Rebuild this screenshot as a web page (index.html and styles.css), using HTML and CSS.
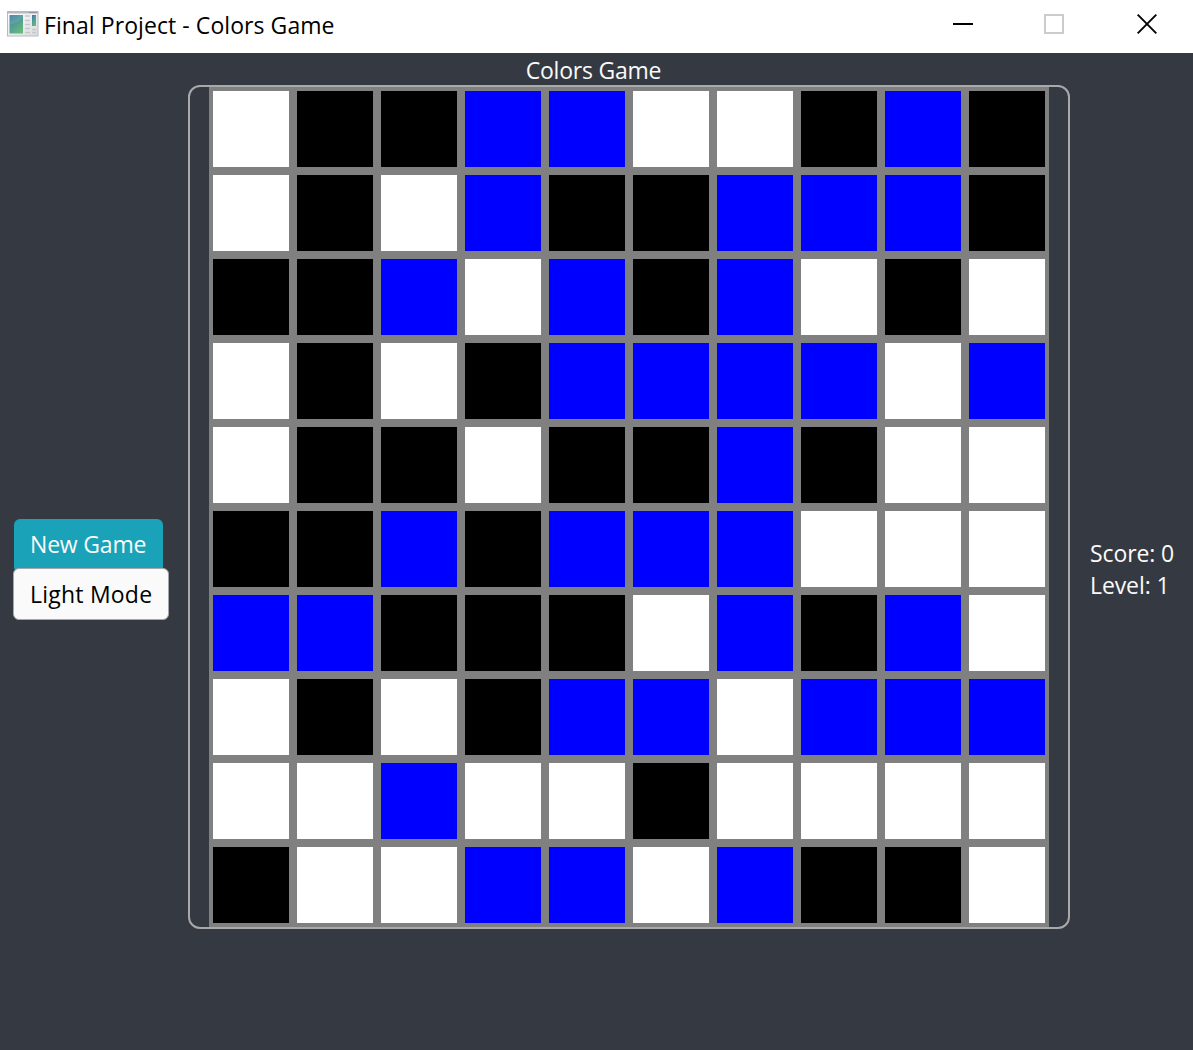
FILE: index.html
```html
<!DOCTYPE html>
<html lang="en">
<head>
<meta charset="utf-8">
<title>Final Project - Colors Game</title>
<link rel="stylesheet" href="styles.css">
</head>
<body>
<header class="titlebar">
  <svg class="app-icon" width="32" height="26" viewBox="0 0 32 26">
    <defs>
      <linearGradient id="pane" x1="0" y1="0" x2="0.6" y2="1"><stop offset="0" stop-color="#3d78a4"/><stop offset=".5" stop-color="#4f9b98"/><stop offset="1" stop-color="#67b77b"/></linearGradient>
      <linearGradient id="frame" x1="0" y1="0" x2="1" y2="1"><stop offset="0" stop-color="#fff"/><stop offset="1" stop-color="#d9dbdd"/></linearGradient>
    </defs>
    <rect x=".5" y=".5" width="30.500" height="24.500" fill="url(#frame)" stroke="#b6bac0"/>
    <path d="M1 1.500h30" stroke="#b4bac4" stroke-width="2"/>
    <path d="M22 1.500h8" stroke="#9097a2" stroke-width="1"/>
    <rect x="2.500" y="4" width="13.500" height="18.500" fill="url(#pane)"/>
    <path d="M2.500 14Q11 12 16 6V4H2.500z" fill="#fff" opacity=".1"/>
    <rect x="25" y="4" width="4" height="11" fill="url(#pane)"/>
    <path d="M18 5h5M18 9.500h5M18 13.500h5M18 17.500h5M18 21.500h5M25 18.500h4M25 21.500h4" stroke="#c4c7ca" stroke-width="1.500"/>
  </svg>
  <span class="window-title">Final Project - Colors Game</span>
  <div class="controls">
    <svg width="20" height="20" viewBox="0 0 20 20"><path d="M0 10h20" stroke="#000" stroke-width="2"/></svg>
    <svg width="20" height="20" viewBox="0 0 20 20"><rect x="1" y="1" width="18" height="18" fill="none" stroke="#ccc" stroke-width="2"/></svg>
    <svg class="close" width="20" height="20" viewBox="0 0 20 20"><path d="M.7.7l18.600 18.600M19.300.7L.7 19.300" stroke="#000" stroke-width="1.900"/></svg>
  </div>
</header>
<h1 class="heading">Colors Game</h1>
<main class="content">
  <nav class="side">
    <button class="btn new-game">New Game</button>
    <button class="btn light-mode">Light Mode</button>
  </nav>
  <section class="board">
    <div class="grid" id="grid"></div>
  </section>
  <aside class="stats">
    <div class="score">Score: 0</div>
    <div class="level">Level: 1</div>
  </aside>
</main>
<script src="game.js"></script>
</body>
</html>
```
FILE: styles.css
```css
* { box-sizing: border-box; }
body {
  margin: 0;
  height: 1050px;
  overflow: hidden;
  display: flex;
  flex-direction: column;
  background: #353a42;
  color: #fafafa;
  font-family: "Open Sans", "Noto Sans", sans-serif;
  font-size: 23px;
  line-height: 32px;
}
.titlebar {
  height: 53px;
  flex: none;
  display: flex;
  align-items: flex-start;
  padding: 11px 36px 0 7px;
  background: #fff;
  color: #000;
}
.window-title { margin: -2px 0 0 5px; letter-spacing: 0.07px; white-space: nowrap; }
.controls { display: flex; gap: 71px; margin: 3px 0 0 auto; }
.close { margin-left: 2px; }
.heading {
  flex: none;
  height: 32px;
  margin: 0;
  padding: 1px 6px 0 0;
  font-size: 23px;
  font-weight: 400;
  text-align: center;
  letter-spacing: -0.22px;
}
.content { flex: 1; display: flex; }
.side {
  width: 188px;
  display: flex;
  flex-direction: column;
  align-items: flex-start;
  justify-content: center;
  padding: 3px 0 0 13px;
}
.btn {
  border: 0;
  border-radius: 6px;
  font: inherit;
  text-align: left;
  white-space: nowrap;
}
.new-game { width: 149px; height: 54px; margin: 0 0 -5px 1px; padding: 0 0 4px 16px; background: #19a2b8; color: #fafafa; letter-spacing: -0.18px; }
.light-mode { width: 156px; height: 52px; border: 1px solid #a5a8ab; padding: 0 0 0 16px; background: #fafafa; color: #000; letter-spacing: 0.22px; }
.board {
  width: 882px;
  height: 844px;
  padding: 0 19px;
  border: 2px solid #a9a9a9;
  border-radius: 12px;
}
.grid {
  display: grid;
  grid-template-columns: repeat(10, 76px);
  grid-auto-rows: 76px;
  gap: 8px;
  width: 840px;
  padding: 4px;
  background: #808080;
}
.white { background: #fff; }
.black { background: #000; }
.blue { background: #00f; }
.stats {
  display: flex;
  flex-direction: column;
  justify-content: center;
  padding: 3px 0 0 20px;
  white-space: nowrap;
  letter-spacing: -0.1px;
}
```
FILE: game.js
```js
const rows = [
  "WKKBBWWKBK",
  "WKWBKKBBBK",
  "KKBWBKBWKW",
  "WKWKBBBBWB",
  "WKKWKKBKWW",
  "KKBKBBBWWW",
  "BBKKKWBKBW",
  "WKWKBBWBBB",
  "WWBWWKWWWW",
  "KWWBBWBKKW"
];
const colors = { W: "white", K: "black", B: "blue" };
const grid = document.getElementById("grid");
for (const code of rows.join("")) {
  const cell = document.createElement("div");
  cell.className = colors[code];
  grid.appendChild(cell);
}
```
